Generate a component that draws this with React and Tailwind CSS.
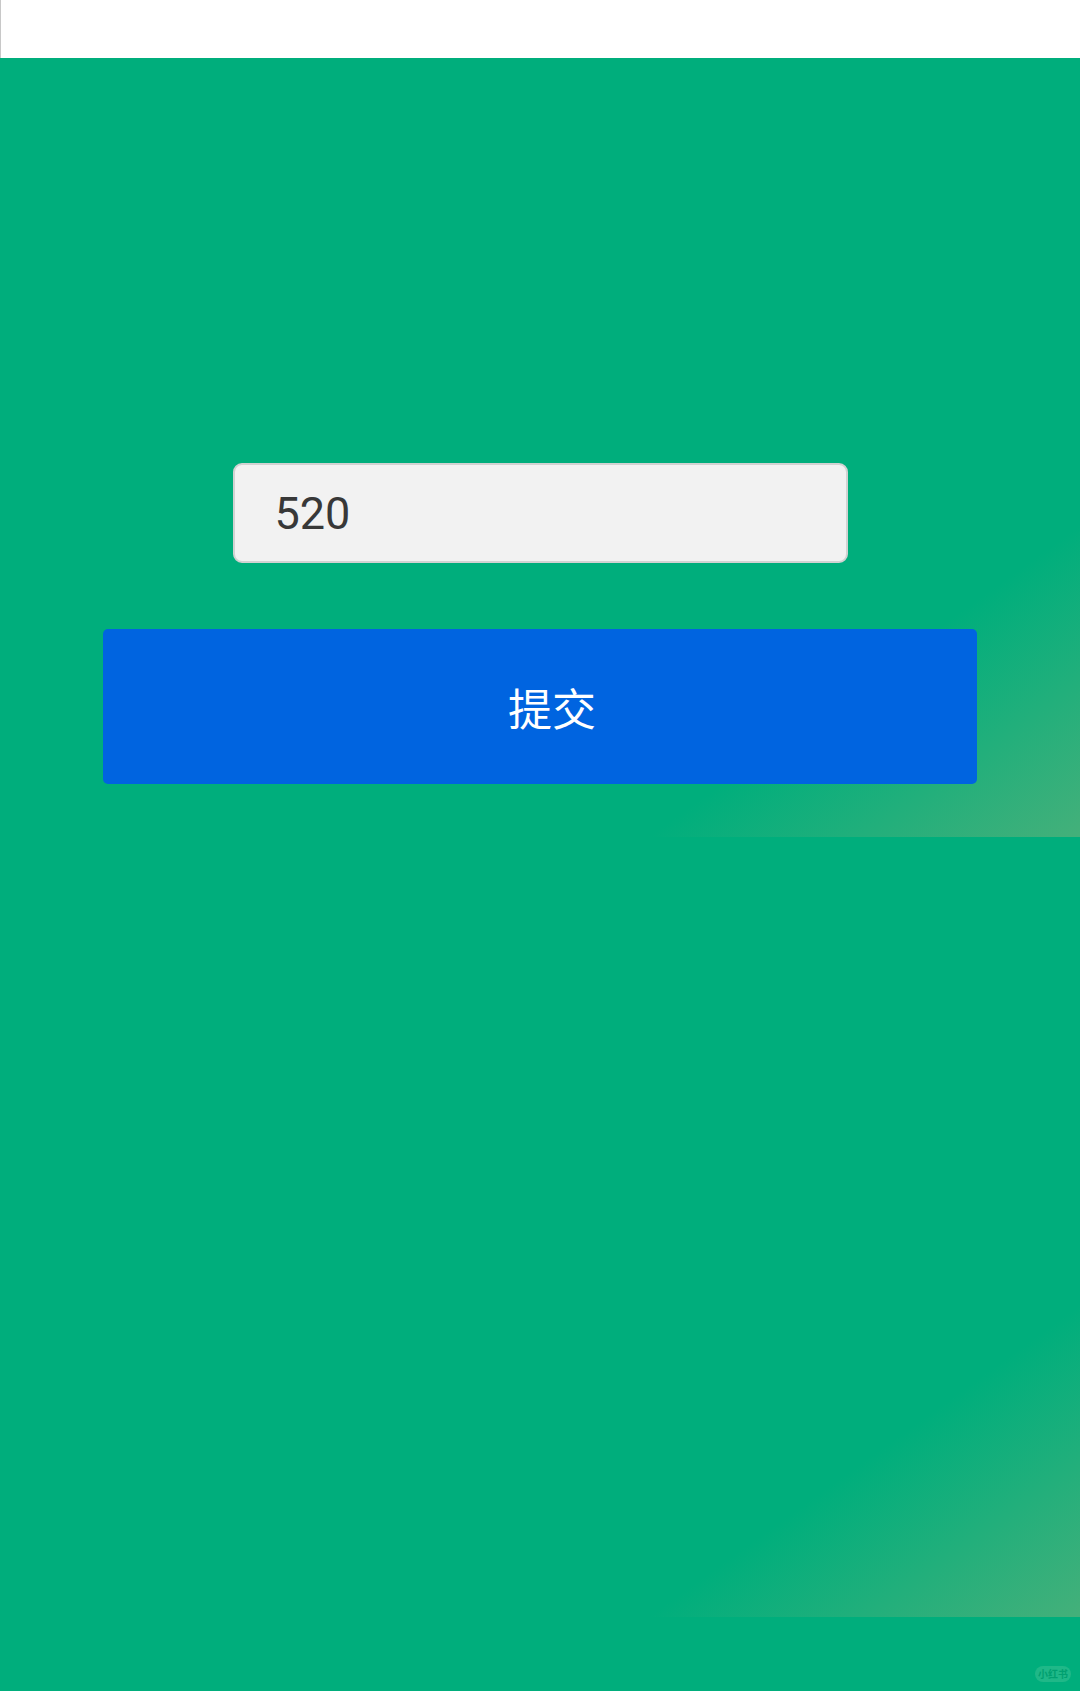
import React from "react";

export default function App() {
  return (
    <div className="w-[1080px] h-[1691px] flex flex-col overflow-hidden bg-[#00ae7c]" style={{ fontFamily: 'Roboto, "Noto Sans CJK SC", sans-serif' }}>
      <div className="h-[58px] shrink-0 bg-white border-l border-[#c8c8c8]" />
      <div className="h-[779px] shrink-0 flex flex-col items-center bg-[linear-gradient(to_bottom_right,#00ae7c_0%,#00ae7c_80%,#44b07a_100%)]">
        <div className="mt-[405px] w-[615px] h-[100px] rounded-[9px] bg-[#f2f2f2] border-2 border-[#d2d2d2] flex items-center pl-[40px]">
          <span className="text-[45px] leading-none text-[#383838]">520</span>
        </div>
        <button className="mt-[66px] w-[874px] h-[155px] rounded-[5px] bg-[#0064e0] flex items-center justify-center pl-[24px]">
          <span className="text-[44px] leading-none text-white" style={{ fontFamily: '"Noto Sans CJK SC", sans-serif' }}>提交</span>
        </button>
      </div>
      <div className="h-[780px] shrink-0 bg-[linear-gradient(to_bottom_right,#00ae7c_0%,#00ae7c_80%,#44b07a_100%)]" />
      <div className="flex-1 flex justify-end items-start pr-[9px] pt-[49px]">
        <div className="w-[36px] h-[16px] rounded-full bg-[#1fb888] flex items-center justify-center">
          <span className="text-[10px] leading-none text-[#00a070] font-bold" style={{ fontFamily: '"Noto Sans CJK SC", sans-serif' }}>小红书</span>
        </div>
      </div>
    </div>
  );
}
